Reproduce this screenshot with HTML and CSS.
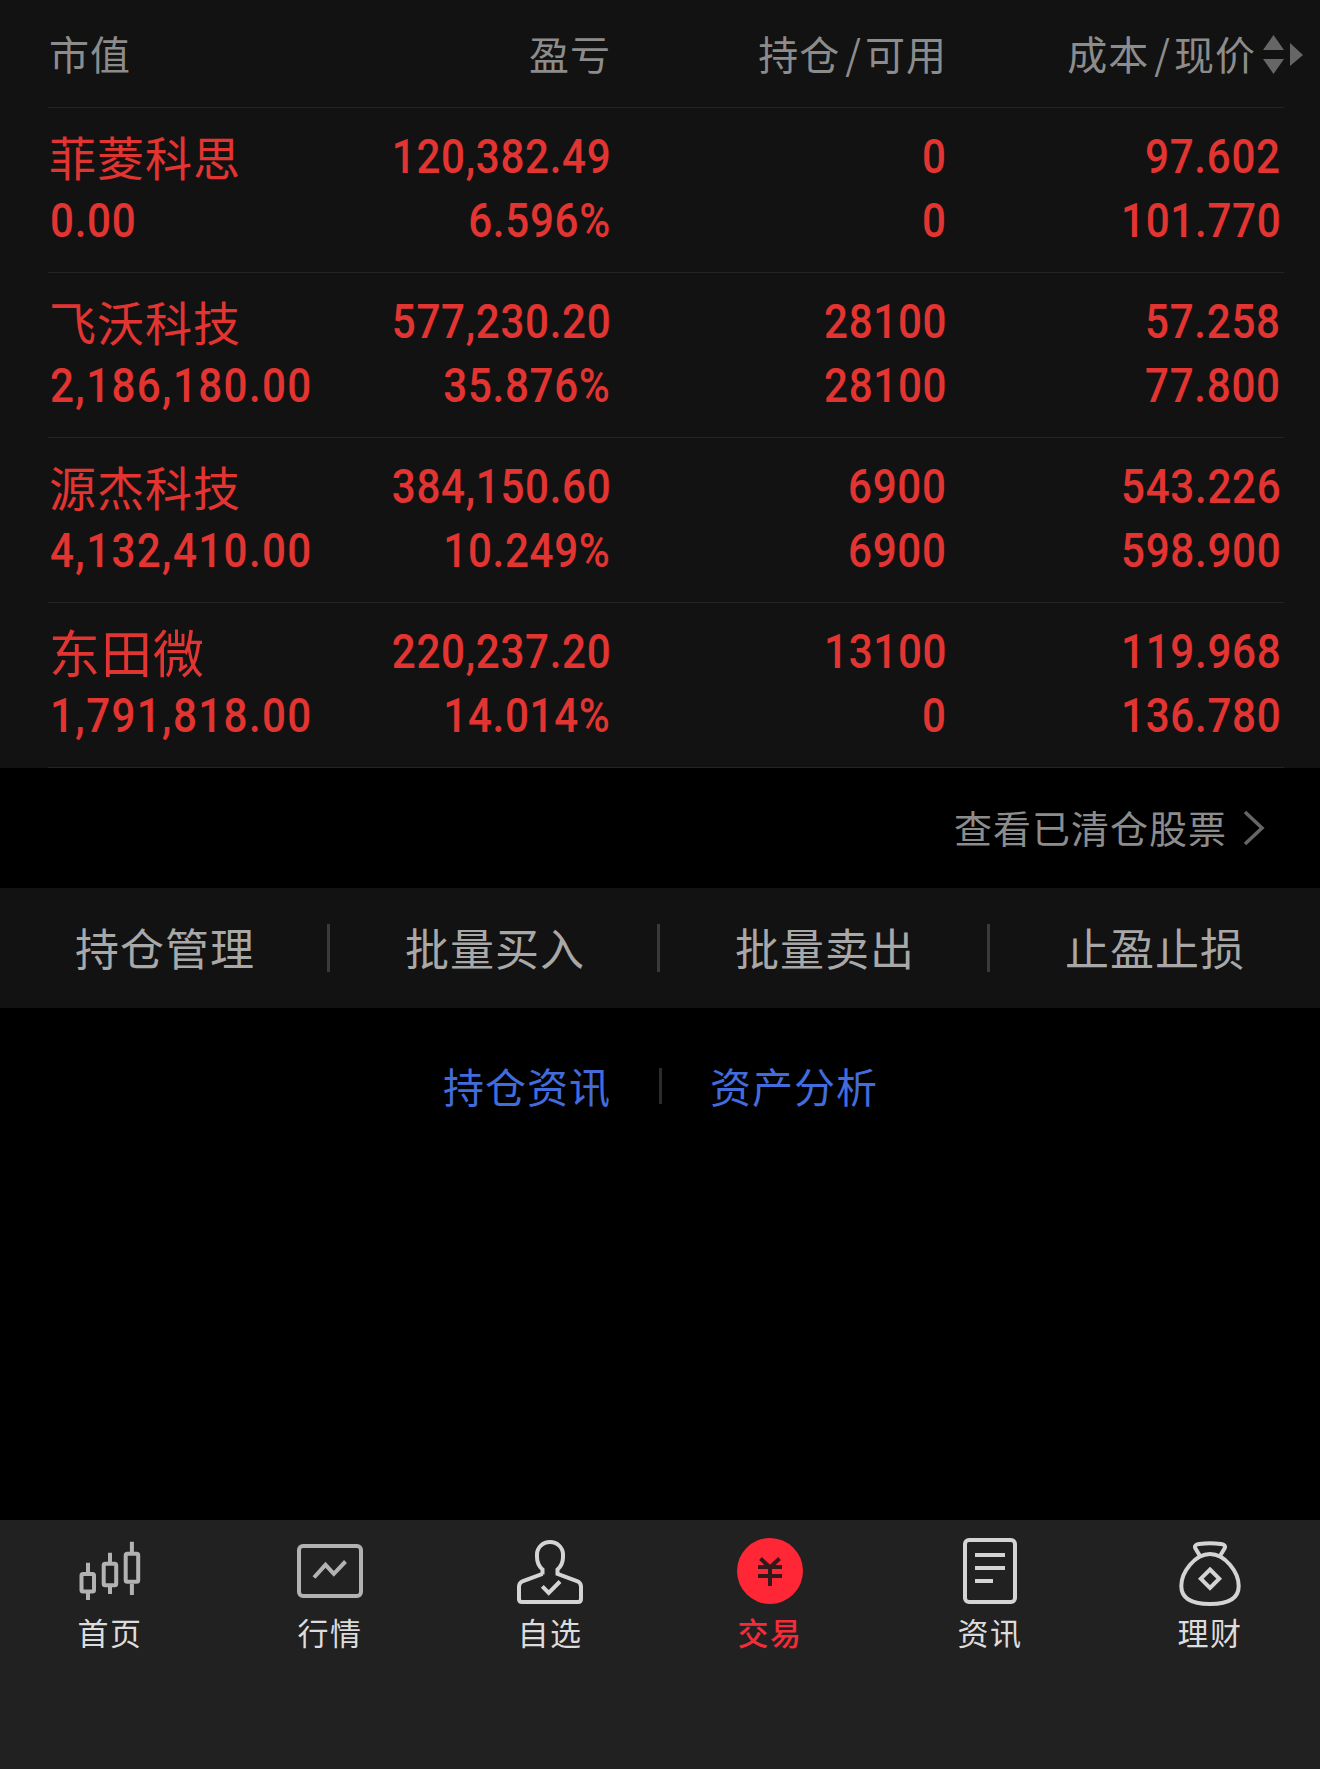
FILE: index.html
```
<!DOCTYPE html>
<html lang="zh-CN">
<head>
<meta charset="UTF-8">
<meta name="viewport" content="width=device-width, initial-scale=1.0">
<title>持仓</title>
<link rel="stylesheet" href="styles.css">
</head>
<body>
<div class="page">
  <section class="holdings">
    <div class="row header">
      <div class="cell"><span>市值</span></div>
      <div class="cell"><span>盈亏</span></div>
      <div class="cell"><span>持仓<span class="slash">/</span>可用</span></div>
      <div class="cell last">
        <span>成本<span class="slash">/</span>现价</span>
        <svg class="sort" width="42" height="40" viewBox="0 0 42 40">
          <path d="M0 16L10.500 1L21 16ZM0 25H21L10.500 40ZM27 9L40 21L27 32Z"/>
        </svg>
      </div>
    </div>

    <div class="row stock">
      <div class="cell"><span class="name">菲菱科思</span><span class="num">0.00</span></div>
      <div class="cell"><span class="num">120,382.49</span><span class="num">6.596%</span></div>
      <div class="cell"><span class="num">0</span><span class="num">0</span></div>
      <div class="cell"><span class="num">97.602</span><span class="num">101.770</span></div>
    </div>
    <div class="row stock">
      <div class="cell"><span class="name">飞沃科技</span><span class="num long">2,186,180.00</span></div>
      <div class="cell"><span class="num">577,230.20</span><span class="num">35.876%</span></div>
      <div class="cell"><span class="num">28100</span><span class="num">28100</span></div>
      <div class="cell"><span class="num">57.258</span><span class="num">77.800</span></div>
    </div>
    <div class="row stock">
      <div class="cell"><span class="name">源杰科技</span><span class="num long">4,132,410.00</span></div>
      <div class="cell"><span class="num">384,150.60</span><span class="num">10.249%</span></div>
      <div class="cell"><span class="num">6900</span><span class="num">6900</span></div>
      <div class="cell"><span class="num">543.226</span><span class="num">598.900</span></div>
    </div>
    <div class="row stock">
      <div class="cell"><span class="name short">东田微</span><span class="num long">1,791,818.00</span></div>
      <div class="cell"><span class="num">220,237.20</span><span class="num">14.014%</span></div>
      <div class="cell"><span class="num">13100</span><span class="num">0</span></div>
      <div class="cell"><span class="num">119.968</span><span class="num">136.780</span></div>
    </div>
  </section>

  <div class="cleared">
    <span>查看已清仓股票</span>
    <svg width="22" height="38" viewBox="0 0 22 38"><path d="M2 3L19 19L2 35"/></svg>
  </div>

  <div class="actions">
    <div class="action">持仓管理</div>
    <div class="action">批量买入</div>
    <div class="action">批量卖出</div>
    <div class="action">止盈止损</div>
  </div>

  <div class="links">
    <a>持仓资讯</a>
    <span class="bar"></span>
    <a>资产分析</a>
  </div>

  <nav class="tabbar">
    <div class="tab dim">
      <svg width="70" height="74" viewBox="0 0 70 74">
        <rect x="6.500" y="39" width="12.500" height="17.500" rx="1.500"/>
        <rect x="28.700" y="28.700" width="12.500" height="21.500" rx="1.500"/>
        <rect x="50.700" y="18.700" width="12.500" height="28" rx="1.500"/>
        <path d="M13 27.700V38M13 58V65M35 17.700V28M35 52V59M56.900 6.700V17M56.900 48.700V60"/>
      </svg>
      <span>首页</span>
    </div>
    <div class="tab dim">
      <svg width="70" height="74" viewBox="0 0 70 74">
        <rect x="4" y="11" width="62" height="50" rx="4"/>
        <path d="M19 42.500L30.500 29.800L38.800 38.800L50.500 26.500"/>
      </svg>
      <span>行情</span>
    </div>
    <div class="tab">
      <svg width="70" height="74" viewBox="0 0 70 74">
        <path d="M27.500 38.800L8 46Q4 47.700 4 51.500V64Q4 67 7 67H63Q66 67 66 64V51.500Q66 47.700 62 46L42.500 38.800V34.500C46.500 31 48 27 48 22V19.500A13 12.500 0 0 0 22 19.500V22C22 27 23.500 31 27.500 34.500V39.500"/>
        <path d="M27.300 51.300L33.700 58L45 46.500"/>
      </svg>
      <span>自选</span>
    </div>
    <div class="tab active">
      <svg width="70" height="74" viewBox="0 0 70 74">
        <circle cx="35" cy="36" r="33"/>
        <path d="M25.500 23.500L35 32.500L44.500 23.500M23 32H47M23 41H47M35 32V51"/>
      </svg>
      <span>交易</span>
    </div>
    <div class="tab">
      <svg width="70" height="74" viewBox="0 0 70 74">
        <rect x="10" y="5" width="50" height="62" rx="4"/>
        <path d="M20 20H50M20 33H50M20 46H38"/>
      </svg>
      <span>资讯</span>
    </div>
    <div class="tab">
      <svg width="70" height="74" viewBox="0 0 70 74">
        <path d="M35 19C50 19 63.700 37 63.700 51C63.700 64 53 69 35 69C17 69 6.300 64 6.300 51C6.300 37 20 19 35 19Z"/>
        <path d="M25 21L20.500 13.500C19 10.500 21 9.500 24 9Q35 7.600 46 9C49 9.500 51 10.500 49.500 13.500L45 21"/>
        <path d="M35 34.500L44.200 43.700L35 52.900L25.800 43.700Z"/>
      </svg>
      <span>理财</span>
    </div>
  </nav>
</div>
</body>
</html>
```
FILE: styles.css
```
body {
  margin: 0;
  background-color: #000;
  font-family: "Noto Sans CJK SC", sans-serif;
}

.page {
  width: 1320px;
  height: 1769px;
  display: flex;
  flex-direction: column;
  overflow: hidden;
}

.holdings {
  background-color: #121212;
  padding: 0 36px 0 48px;
}

.row {
  display: grid;
  grid-template-columns: 282px 281px 336px 337px;
  box-sizing: border-box;
  border-bottom: 1px solid #242424;
}

.cell {
  display: flex;
  flex-direction: column;
  align-items: flex-end;
}

.cell:first-child {
  align-items: flex-start;
  padding-left: 2px;
}

.cell:last-child {
  padding-right: 3px;
}

/* table head */
.header {
  height: 108px;
  font-size: 40px;
  line-height: 106px;
  letter-spacing: 1px;
  color: #8c8c8c;
}

.header .cell:first-child {
  padding-left: 1px;
}

.header .last {
  flex-direction: row;
  align-items: flex-start;
  justify-content: flex-end;
  gap: 7px;
  padding-right: 0;
  margin-right: -21px;
  white-space: nowrap;
}

.slash {
  margin: 0 3px 0 5px;
}

.sort {
  fill: #666;
  margin-top: 34px;
}

/* stock rows */
.stock {
  height: 165px;
  padding-top: 17px;
  color: #e23532;
}

.name {
  height: 64px;
  line-height: 62px;
  font-size: 47px;
  letter-spacing: 1px;
  margin-left: -1px;
}

.name.short {
  font-size: 51px;
}

.num {
  height: 64px;
  line-height: 64px;
  font-family: Roboto, sans-serif;
  font-size: 49px;
  font-weight: 500;
  letter-spacing: 0.8px;
  transform: scaleX(0.86);
  transform-origin: right center;
}

.num.long {
  letter-spacing: 1.6px;
}

.cell:first-child .num {
  transform-origin: left center;
}

/* closed positions */
.cleared {
  height: 120px;
  display: flex;
  align-items: center;
  justify-content: flex-end;
  gap: 16px;
  padding-right: 55px;
  font-size: 38px;
  letter-spacing: 1px;
  color: #8c8c8c;
}

.cleared span {
  padding-bottom: 4px;
}

.cleared svg {
  fill: none;
  stroke: #666;
  stroke-width: 3.5;
}

.actions {
  height: 120px;
  display: flex;
  background-color: #121212;
}

.action {
  width: 330px;
  line-height: 119px;
  text-align: center;
  position: relative;
  font-size: 44px;
  letter-spacing: 1px;
  color: #a8a8a8;
}

.action:not(:last-child)::after {
  content: "";
  position: absolute;
  top: 36px;
  right: 0;
  width: 3px;
  height: 48px;
  background-color: #3a3a3a;
}

.links {
  height: 156px;
  display: flex;
  align-items: center;
  justify-content: center;
  gap: 48px;
  padding-left: 1px;
  font-size: 41px;
  letter-spacing: 1px;
  color: #426cdc;
}

.links a {
  padding-bottom: 2px;
}

.links .bar {
  width: 3px;
  height: 36px;
  background-color: #2c2c2c;
}

/* bottom tabs */
.tabbar {
  height: 249px;
  margin-top: auto;
  display: flex;
  background-color: #212121;
}

.tab {
  width: 220px;
  display: flex;
  flex-direction: column;
  align-items: center;
  padding-top: 15px;
  font-size: 31px;
  line-height: 46px;
  letter-spacing: 1.5px;
  color: #dcdcdc;
}

.tab svg {
  fill: none;
  stroke: #d4d4d4;
  stroke-width: 4;
}

.tab.dim svg {
  stroke: #b2b2b2;
}

.tab.active {
  color: #f42c3a;
  font-weight: 500;
}

.tab.active circle {
  fill: #ff2636;
  stroke: none;
}

.tab.active path {
  stroke: #33191c;
}
```
